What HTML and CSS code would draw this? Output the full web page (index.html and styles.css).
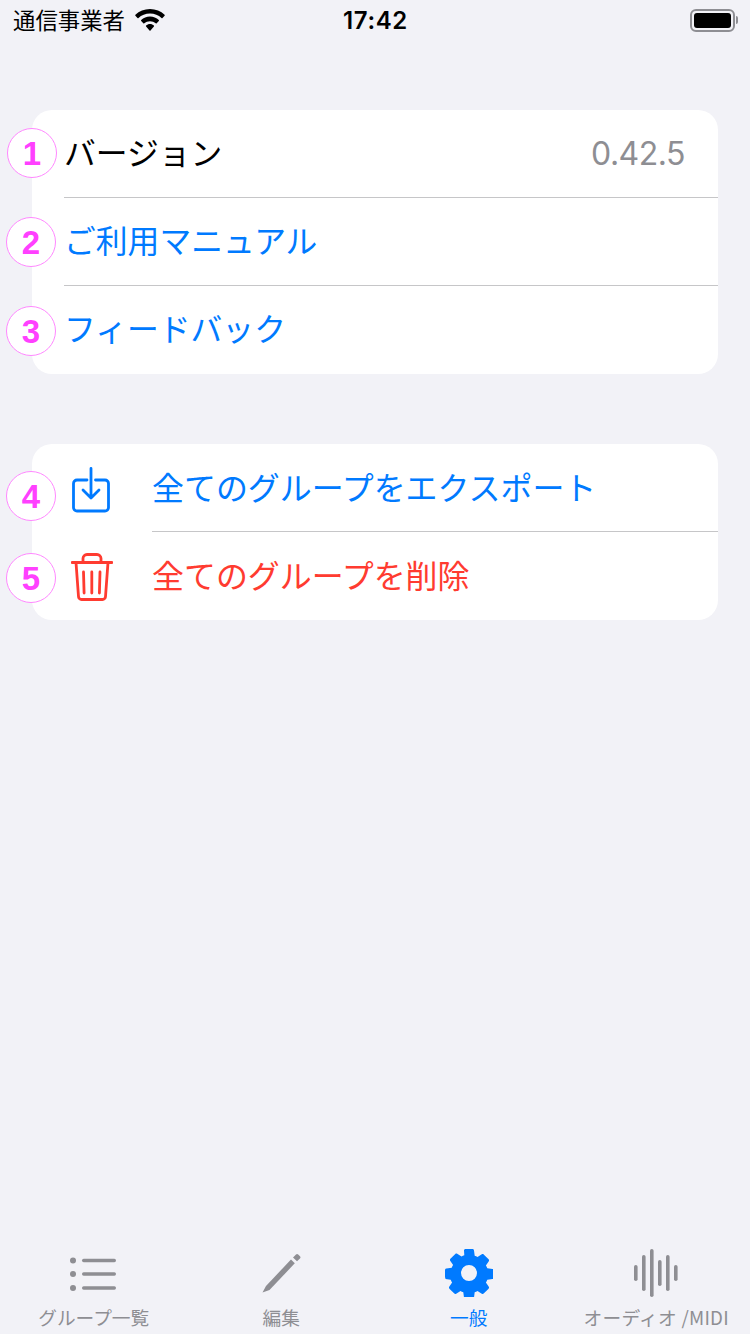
FILE: index.html
```html
<!DOCTYPE html>
<html lang="ja">
<head>
<meta charset="utf-8">
<title>一般</title>
<link rel="stylesheet" href="styles.css">
</head>
<body>
<div class="screen">
  <header class="status">
    <div class="status-left">
      <span class="carrier">通信事業者</span>
      <svg class="wifi" viewBox="0 0 30 22"><path d="M15 0C9.300 0 4.200 2.200.4 5.800c-.3.300-.3.700 0 1l2.100 2.200c.3.300.7.300 1 0C6.500 6.200 10.500 4.500 15 4.500s8.500 1.700 11.500 4.500c.3.300.7.300 1 0l2.100-2.200c.3-.3.300-.7 0-1C25.800 2.200 20.700 0 15 0z"/><path d="M15 7.600c-3.400 0-6.500 1.300-8.800 3.500-.3.300-.3.700 0 1l2.100 2.200c.3.300.7.300 1 0 1.500-1.300 3.500-2.100 5.700-2.100s4.200.8 5.700 2.100c.3.300.7.300 1 0l2.100-2.200c.3-.3.300-.7 0-1-2.300-2.200-5.400-3.500-8.800-3.500z"/><path d="M15 15c-1.500 0-2.900.6-3.900 1.500-.3.300-.3.700 0 1l3.400 4c.3.300.7.300 1 0l3.400-4c.3-.3.300-.7 0-1-1-.9-2.400-1.500-3.900-1.500z"/></svg>
    </div>
    <time class="clock">17:42</time>
    <div class="status-right">
      <span class="battery"><span class="battery-fill"></span></span>
      <span class="battery-cap"></span>
    </div>
  </header>

  <main class="content">
    <section class="card">
      <div class="row">
        <span class="row-label plain">バージョン</span>
        <span class="row-value">0.42.5</span>
        <span class="badge pos-1">1</span>
      </div>
      <div class="row">
        <span class="row-label link">ご利用マニュアル</span>
        <span class="badge pos-2">2</span>
      </div>
      <div class="row">
        <span class="row-label link">フィードバック</span>
        <span class="badge pos-3">3</span>
      </div>
    </section>

    <section class="card">
      <div class="row icon-row">
        <svg class="row-icon link-stroke" viewBox="0 0 38 46"><path d="M15 13H5a3.500 3.500 0 0 0-3.500 3.500v24A3.500 3.500 0 0 0 5 44h28a3.500 3.500 0 0 0 3.500-3.500v-24A3.500 3.500 0 0 0 33 13H23.500"/><path d="M19 1.500v29.500M11 23l8 8 8-8"/></svg>
        <span class="row-label wide link">全てのグループをエクスポート</span>
        <span class="badge pos-4">4</span>
      </div>
      <div class="row icon-row">
        <svg class="row-icon danger-stroke" viewBox="0 0 42 48"><path d="M1 9.500h40M5 9.500l2.500 34A3 3 0 0 0 10.500 46.500h21a3 3 0 0 0 3-3L37 9.500M12 9.500V5.500a4 4 0 0 1 4-4h10a4 4 0 0 1 4 4v4M12.500 19l.6 21M20.800 19v21M29 19l-.6 21"/></svg>
        <span class="row-label wide danger">全てのグループを削除</span>
        <span class="badge pos-5">5</span>
      </div>
    </section>
  </main>

  <nav class="tabs">
    <div class="tab">
      <svg class="tab-icon list-icon" viewBox="0 0 46 36"><circle cx="3" cy="3.500" r="3"/><circle cx="3" cy="17" r="3"/><circle cx="3" cy="31" r="3"/><rect x="12" y="1.800" width="34" height="3.400" rx="1.700"/><rect x="12" y="15.300" width="34" height="3.400" rx="1.700"/><rect x="12" y="29.300" width="34" height="3.400" rx="1.700"/></svg>
      <span>グループ一覧</span>
    </div>
    <div class="tab">
      <svg class="tab-icon" viewBox="0 0 48 48"><path d="M9 37 34 10.500l3.800 3.800L12.500 41l-7 2.500z"/><path d="M36 8.500l3-3a1.500 1.500 0 0 1 2.200 0l1.800 1.800a1.500 1.500 0 0 1 0 2.200L40 12.300z"/></svg>
      <span>編集</span>
    </div>
    <div class="tab">
      <svg class="tab-icon active-icon" viewBox="0 0 48 48"><path fill-rule="evenodd" d="M19 1.500c0-.8.700-1.500 1.500-1.500h7c.8 0 1.500.7 1.500 1.500l.7 5.200c1 .4 2 .8 2.800 1.400l4.300-2.900c.6-.4 1.400-.3 1.900.2l4.900 4.900c.5.500.6 1.300.2 1.900l-2.900 4.300c.6.900 1 1.800 1.400 2.800l5.200.7c.8 0 1.500.7 1.500 1.500v7c0 .8-.7 1.500-1.500 1.500l-5.200.7c-.4 1-.8 2-1.400 2.800l2.900 4.300c.4.600.3 1.400-.2 1.900l-4.900 4.900c-.5.500-1.300.6-1.900.2l-4.300-2.900c-.9.600-1.800 1-2.800 1.400l-.7 5.200c0 .8-.7 1.500-1.500 1.500h-7c-.8 0-1.500-.7-1.500-1.500l-.7-5.200c-1-.4-2-.8-2.800-1.400l-4.300 2.900c-.6.400-1.400.3-1.900-.2l-4.900-4.900c-.5-.5-.6-1.300-.2-1.900l2.900-4.300c-.6-.9-1-1.800-1.400-2.800l-5.200-.7C.7 29.500 0 28.800 0 28v-7c0-.8.700-1.500 1.500-1.500l5.200-.7c.4-1 .8-2 1.400-2.800L5.200 11.700c-.4-.6-.3-1.400.2-1.900l4.900-4.900c.5-.5 1.300-.6 1.900-.2l4.300 2.900c.9-.6 1.800-1 2.800-1.400zM24 16a8 8 0 1 0 0 16 8 8 0 0 0 0-16z"/></svg>
      <span class="active-label">一般</span>
    </div>
    <div class="tab">
      <svg class="tab-icon" viewBox="0 0 44 48"><rect x="0" y="16" width="3.600" height="16" rx="1.800"/><rect x="8" y="6" width="3.600" height="36" rx="1.800"/><rect x="16" y="0" width="3.600" height="48" rx="1.800"/><rect x="24" y="11" width="3.600" height="26" rx="1.800"/><rect x="32" y="6" width="3.600" height="36" rx="1.800"/><rect x="40" y="16" width="3.600" height="16" rx="1.800"/></svg>
      <span class="audio-label">オーディオ /MIDI</span>
    </div>
  </nav>
</div>
</body>
</html>
```
FILE: styles.css
```css
* { box-sizing: border-box; }
html, body { margin: 0; padding: 0; }
body {
  width: 750px;
  height: 1334px;
  overflow: hidden;
  background: #f2f2f7;
  font-family: "Noto Sans CJK JP", "Noto Sans", sans-serif;
}
.screen {
  width: 750px;
  height: 1334px;
  display: flex;
  flex-direction: column;
  background: #f2f2f7;
}

/* status bar */
.status {
  height: 40px;
  flex: none;
  display: grid;
  grid-template-columns: 1fr auto 1fr;
  align-items: center;
  padding: 0 12px 0 13px;
  color: #000;
}
.status-left { display: flex; align-items: center; gap: 10px; }
.carrier { font-size: 22.400px; line-height: 40px; margin-top: -3px; }
.wifi { width: 30px; height: 22px; fill: #000; margin-top: -1px; }
.clock { font-family: Inter, sans-serif; font-size: 24px; font-weight: 600; letter-spacing: .6px; }
.status-right { display: flex; align-items: center; justify-content: flex-end; }
.battery {
  width: 45px;
  height: 23px;
  border: 2px solid #8e8e93;
  border-radius: 6px;
  padding: 2px;
  display: block;
}
.battery-fill { display: block; width: 100%; height: 100%; background: #000; border-radius: 3px; }
.battery-cap { width: 2px; height: 8px; background: #8e8e93; border-radius: 0 2px 2px 0; margin-left: 1px; }

/* cards */
.content {
  flex: 1;
  display: flex;
  flex-direction: column;
  gap: 70px;
  padding: 70px 32px 0;
}
.card {
  background: #fff;
  border-radius: 20px;
  padding-left: 32px;
}
.row {
  position: relative;
  height: 88px;
  display: flex;
  align-items: center;
  justify-content: space-between;
  padding-right: 33px;
  border-bottom: 1px solid #c6c6c8;
}
.row:last-child { border-bottom: 0; }
.row-label { font-size: 31.800px; line-height: 40px; white-space: nowrap; position: relative; top: -3px; }
.row-label.wide { font-size: 31.950px; top: -2px; }
.plain { color: #000; }
.link { color: #007aff; }
.danger { color: #ff3b30; }
.row-value { font-family: Inter, sans-serif; font-size: 32px; letter-spacing: -.5px; color: #8e8e93; }

.icon-row { justify-content: flex-start; margin-left: 88px; padding-right: 0; }
.row-icon {
  position: absolute;
  fill: none;
  stroke-width: 2.800;
  stroke-linecap: round;
  stroke-linejoin: round;
}
.link-stroke { left: -80px; top: 23px; width: 38px; height: 46px; stroke: #007aff; }
.danger-stroke { left: -81px; top: 21px; width: 42px; height: 48px; stroke: #ff3b30; }

/* annotation badges */
.badge {
  position: absolute;
  width: 50px;
  height: 50px;
  border-radius: 50%;
  background: #fff;
  border: 1.500px solid #ff88ff;
  color: #ff40ff;
  font-family: "Liberation Sans", sans-serif;
  font-size: 33px;
  font-weight: 700;
  line-height: 49px;
  text-align: center;
}
.pos-1 { left: -57px; top: 18px; }
.pos-2 { left: -58px; top: 19px; }
.pos-3 { left: -58px; top: 20px; }
.pos-4 { left: -146px; top: 27px; }
.pos-5 { left: -146px; top: 21px; }

/* tab bar */
.tabs {
  flex: none;
  height: 98px;
  display: grid;
  grid-template-columns: repeat(4, 1fr);
}
.tab {
  display: flex;
  flex-direction: column;
  align-items: center;
  height: 98px;
  padding-top: 13px;
  color: #8e8e93;
  font-size: 18.700px;
  line-height: 26px;
  white-space: nowrap;
}
.tab-icon { width: 48px; height: 48px; fill: currentColor; flex: none; }
.list-icon { width: 46px; height: 36px; margin: 8px 2px 4px 0; }
.active-icon { fill: #007aff; }
.active-label { color: #007aff; }
.audio-label { letter-spacing: .25px; }
.tab span { margin-top: 7px; }
```
